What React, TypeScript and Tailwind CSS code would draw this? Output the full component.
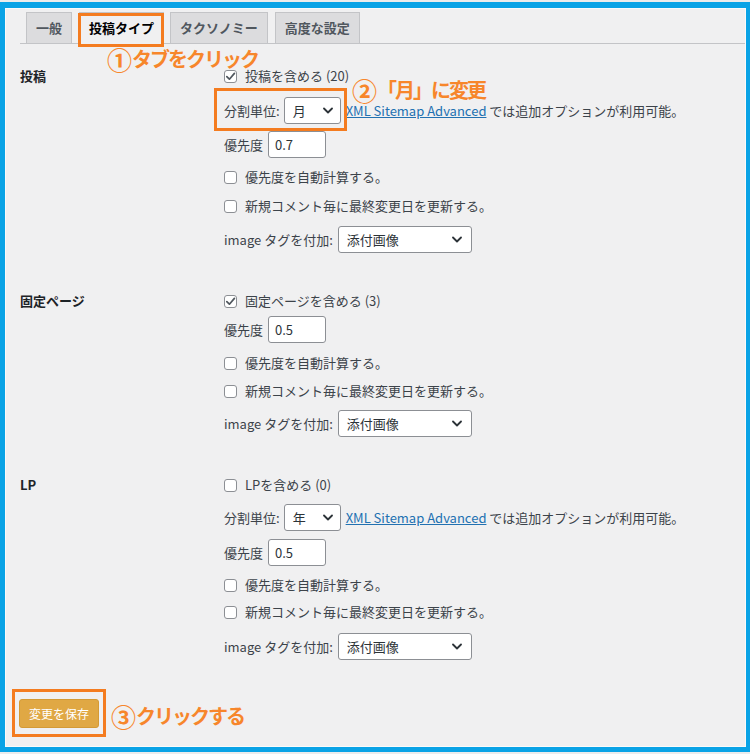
import type { FC, ReactNode } from 'react';

const FONT = "font-['Noto_Sans_CJK_JP','Noto_Sans',sans-serif]";

const tabs = [
  { label: '一般', active: false, ml: 'ml-[6px]' },
  { label: '投稿タイプ', active: true, ml: 'ml-[7px]' },
  { label: 'タクソノミー', active: false, ml: 'ml-[6px]' },
  { label: '高度な設定', active: false, ml: 'ml-[7px]' },
];

const Chevron: FC = () => (
  <svg width="10" height="7" viewBox="0 0 10 7" className="shrink-0">
    <path d="M1 1.5 5 5.5 9 1.5" fill="none" stroke="#2c3338" strokeWidth="1.8" strokeLinecap="round" strokeLinejoin="round" />
  </svg>
);

const Checkbox: FC<{ checked?: boolean; label: ReactNode; mt?: string }> = ({ checked, label, mt = '' }) => (
  <div className={`flex h-[20px] items-center ${mt}`}>
    <span className="flex size-[13px] shrink-0 items-center justify-center rounded-[3px] border border-[#8c8f94] bg-white">
      {checked && (
        <svg width="11" height="11" viewBox="0 0 11 11">
          <path d="M1.8 5.6 4.4 8.2 9.4 2.4" fill="none" stroke="#50575e" strokeWidth="1.7" strokeLinecap="round" strokeLinejoin="round" />
        </svg>
      )}
    </span>
    <span className="ml-[8px] whitespace-nowrap">{label}</span>
  </div>
);

const Select: FC<{ value: string; width: string; pr: string }> = ({ value, width, pr }) => (
  <span className={`flex h-[27px] ${width} items-center justify-between rounded-[3px] border border-[#8c8f94] bg-white pl-[8px] ${pr} text-[#2c3338]`}>
    {value}
    <Chevron />
  </span>
);

const PriorityRow: FC<{ value: string; mt: string }> = ({ value, mt }) => (
  <div className={`flex h-[27px] items-center ${mt}`}>
    <span>優先度</span>
    <span className="ml-[5px] flex h-[27px] w-[58px] items-center rounded-[3px] border border-[#8c8f94] bg-white pl-[6px] text-[#2c3338]">
      {value}
    </span>
  </div>
);

const SplitRow: FC<{ value: string; mt: string }> = ({ value, mt }) => (
  <div className={`flex h-[27px] items-center leading-[15px] ${mt}`}>
    <span>分割単位:</span>
    <span className="ml-[4px]">
      <Select value={value} width="w-[57px]" pr="pr-[7px]" />
    </span>
    <span className="ml-[5px] whitespace-nowrap">
      <span className="text-[#2271b1] underline">XML Sitemap Advanced</span> では追加オプションが利用可能。
    </span>
  </div>
);

const ImageRow: FC<{ mt: string }> = ({ mt }) => (
  <div className={`flex h-[27px] items-center ${mt}`}>
    <span>image タグを付加:</span>
    <span className="ml-[5px]">
      <Select value="添付画像" width="w-[134px]" pr="pr-[9px]" />
    </span>
  </div>
);

const Section: FC<{ title: string; mt: string; children: ReactNode }> = ({ title, mt, children }) => (
  <div className={`flex ${mt}`}>
    <div className="flex h-[20px] w-[204px] shrink-0 items-center font-bold text-[#1d2327]">{title}</div>
    <div className="flex flex-col">{children}</div>
  </div>
);

const Note: FC<{ num: string; text: string; className: string }> = ({ num, text, className }) => (
  <div className={`absolute flex h-[20px] items-center whitespace-nowrap font-semibold text-[#f7862b] ${className}`}>
    <span className="text-[25px] leading-[20px]">{num}</span>
    <span className="text-[20px] leading-[20px] tracking-[-2px]">{text}</span>
  </div>
);

const App: FC = () => (
  <div className={`relative h-[754px] w-[750px] overflow-hidden bg-[#ececec] pt-[2px] text-[13px] text-[#3c434a] ${FONT}`}>
    <div className="h-[750px] border-t-[6px] border-r-[4px] border-b-[5px] border-l-[5px] border-[#0aa3e6]">
      <div className="h-full border border-[#fafafa] bg-[#f0f0f1]">
        <div className="mt-[3px] ml-[14px] flex items-end border-b border-[#c3c4c7]">
          {tabs.map(tab => (
            <div
              key={tab.label}
              className={`${tab.ml} -mb-px flex h-[32px] items-center border px-[9px] text-[13px] font-bold ${
                tab.active
                  ? 'border-[#c3c4c7] border-b-[#f0f0f1] bg-[#f0f0f1] text-black'
                  : 'border-[#c3c4c7] bg-[#dcdcde] text-[#50575e]'
              }`}
            >
              {tab.label}
            </div>
          ))}
        </div>

        <div className="pl-[14px]">
          <Section title="投稿" mt="mt-[22px]">
            <Checkbox checked label="投稿を含める (20)" />
            <SplitRow value="月" mt="mt-[11px]" />
            <PriorityRow value="0.7" mt="mt-[7px]" />
            <Checkbox label="優先度を自動計算する。" mt="mt-[9px]" />
            <Checkbox label="新規コメント毎に最終変更日を更新する。" mt="mt-[9px]" />
            <ImageRow mt="mt-[10px]" />
          </Section>

          <Section title="固定ページ" mt="mt-[38px]">
            <Checkbox checked label="固定ページを含める (3)" />
            <PriorityRow value="0.5" mt="mt-[5px]" />
            <Checkbox label="優先度を自動計算する。" mt="mt-[10px]" />
            <Checkbox label="新規コメント毎に最終変更日を更新する。" mt="mt-[8px]" />
            <ImageRow mt="mt-[9px]" />
          </Section>

          <Section title="LP" mt="mt-[38px]">
            <Checkbox label="LPを含める (0)" />
            <SplitRow value="年" mt="mt-[9px]" />
            <PriorityRow value="0.5" mt="mt-[8px]" />
            <Checkbox label="優先度を自動計算する。" mt="mt-[9px]" />
            <Checkbox label="新規コメント毎に最終変更日を更新する。" mt="mt-[7px]" />
            <ImageRow mt="mt-[11px]" />
          </Section>
        </div>

        <div className="mt-[39px] pl-[13px]">
          <button className="flex h-[29px] w-[80px] items-center justify-center rounded-[3px] border border-[#d49a35] bg-[#e0a844] text-[12px] text-white">
            変更を保存
          </button>
        </div>
      </div>
    </div>

    <div className="absolute top-[13px] left-[78px] h-[34px] w-[86px] border-[3px] border-[#f47c20]" />
    <div className="absolute top-[88px] left-[214px] h-[43px] w-[133px] border-[3px] border-[#f47c20]" />
    <div className="absolute top-[689px] left-[12px] h-[48px] w-[94px] border-[3px] border-[#f47c20]" />

    <Note num="①" text="タブをクリック" className="top-[49px] left-[107px]" />
    <Note num="②" text="「月」に変更" className="top-[80px] left-[352px]" />
    <Note num="③" text="クリックする" className="top-[706px] left-[111px]" />
  </div>
);

export default App;
